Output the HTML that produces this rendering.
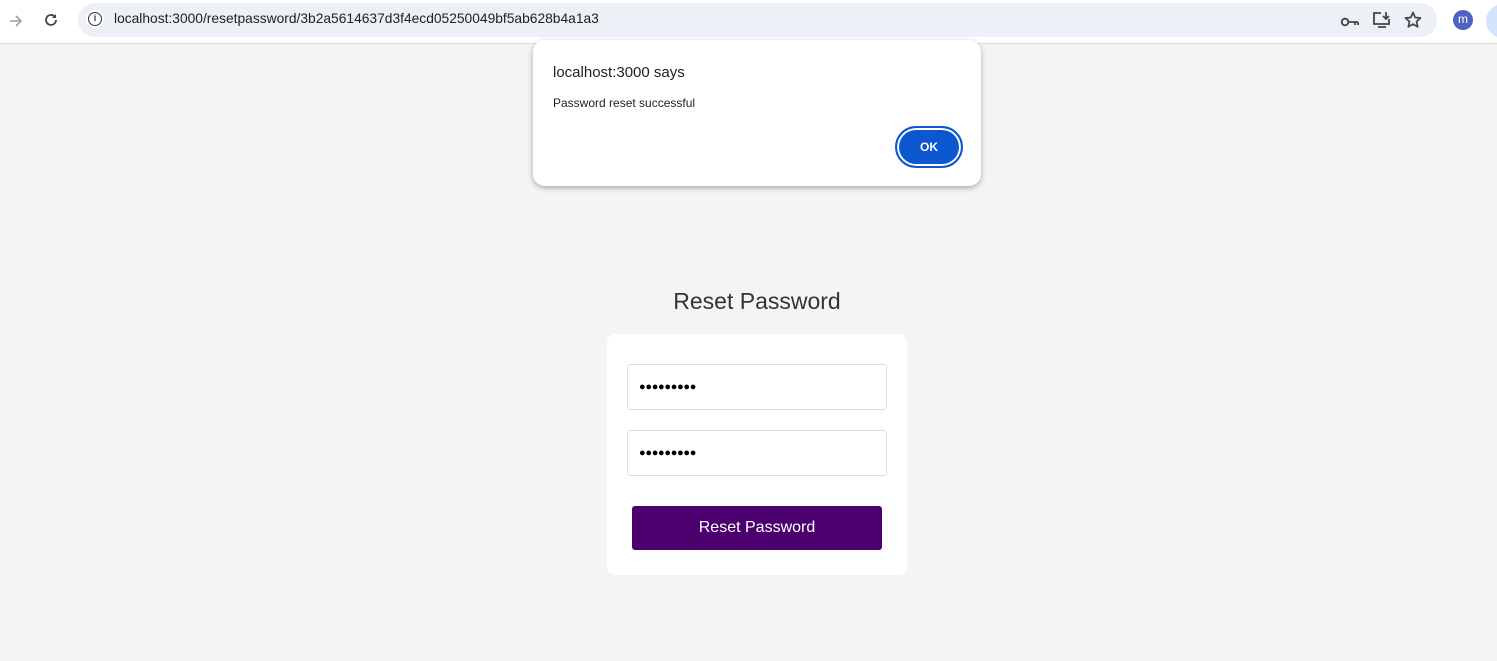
<!DOCTYPE html>
<html><head><style>
*{margin:0;padding:0;box-sizing:border-box}
body{width:1497px;height:661px;background:#f4f4f4;font-family:"Liberation Sans",sans-serif;position:relative;overflow:hidden}
.bar{position:absolute;left:0;top:0;width:1497px;height:44px;background:#fff;border-bottom:1px solid #dadce0}
.omni{position:absolute;left:78px;top:3px;width:1359px;height:34px;background:#edf0f7;border-radius:17px}
.url{position:absolute;left:114px;top:11px;font-size:13.8px;color:#1f1f1f}
.abs{position:absolute}
.dlg{position:absolute;left:533px;top:40px;width:448px;height:146px;background:#fff;border-radius:12px;box-shadow:0 2px 6px rgba(0,0,0,.3)}
.ok{position:absolute;left:362px;top:86px;width:68px;height:42px;border-radius:21px;background:#0b57d0;border:2px solid #0b57d0;box-shadow:inset 0 0 0 2px #fff;color:#fff;font-weight:bold;font-size:12px;text-align:center;line-height:38px}
.card{position:absolute;left:607px;top:334px;width:300px;height:241px;background:#fff;border-radius:8px}
.inp{position:absolute;left:20px;width:260px;height:46px;border:1px solid #ddd;border-radius:3px;font-size:11px;letter-spacing:-0.3px;padding:16px 0 0 11px;color:#000}
.btn{position:absolute;left:25px;top:172px;width:250px;height:44px;background:#4b006e;border-radius:3px;color:#fff;font-size:16px;text-align:center;line-height:44px}
</style></head><body>
<div class="bar">
<svg class="abs" style="left:7px;top:12px" width="18" height="18" viewBox="0 0 18 18"><path d="M3 9h11M9 4l5 5-5 5" stroke="#9aa0a6" stroke-width="1.6" fill="none"/></svg>
<svg class="abs" style="left:42px;top:11px" width="18" height="18" viewBox="0 0 18 18"><path d="M14 9a5 5 0 1 1-1.5-3.6" stroke="#444" stroke-width="1.8" fill="none"/><path d="M14 3v4h-4z" fill="#444"/></svg>
<div class="omni"></div>
<div class="abs" style="left:86px;top:10px;width:18px;height:18px;border-radius:50%;background:#fff"></div>
<div class="abs" style="left:88px;top:12px;width:14px;height:14px;border:1.6px solid #333;border-radius:50%;font-size:9px;font-weight:bold;text-align:center;line-height:11px;color:#333">i</div>
<div class="url">localhost:3000/resetpassword/3b2a5614637d3f4ecd05250049bf5ab628b4a1a3</div>
<svg class="abs" style="left:1340px;top:12px" width="20" height="20" viewBox="0 0 20 20"><circle cx="5" cy="10" r="3.3" stroke="#444" stroke-width="1.8" fill="none"/><path d="M8 10h10M15 10v3M18 10v3" stroke="#444" stroke-width="1.8"/></svg>
<svg class="abs" style="left:1372px;top:10px" width="20" height="20" viewBox="0 0 20 20"><path d="M9 3H2v11h15V9" stroke="#444" stroke-width="1.8" fill="none"/><path d="M6 17h8M14 2v7M11 6l3 3 3-3" stroke="#444" stroke-width="1.8" fill="none"/></svg>
<svg class="abs" style="left:1403px;top:10px" width="20" height="20" viewBox="0 0 20 20"><path d="M10 2.5l2.2 5 5.3.5-4 3.6 1.2 5.2L10 14.1l-4.7 2.7 1.2-5.2-4-3.6 5.3-.5z" stroke="#444" stroke-width="1.7" fill="none" stroke-linejoin="round"/></svg>
<div class="abs" style="left:1453px;top:10px;width:20px;height:20px;border-radius:50%;background:#5062c0;color:#fff;font-size:12px;text-align:center;line-height:19px">m</div>
<div class="abs" style="left:1486px;top:4px;width:34px;height:34px;border-radius:50%;background:#d3e3fd"></div>
</div>
<div class="dlg">
<div class="abs" style="left:20px;top:24px;font-size:15px;color:#1f1f1f">localhost:3000 says</div>
<div class="abs" style="left:20px;top:56px;font-size:12px;color:#1f1f1f">Password reset successful</div>
<div class="ok">OK</div>
</div>
<div class="abs" style="left:0;width:1514px;top:288px;text-align:center;font-size:23px;color:#333">Reset Password</div>
<div class="card">
<div class="inp" style="top:30px">●●●●●●●●●</div>
<div class="inp" style="top:96px">●●●●●●●●●</div>
<div class="btn">Reset Password</div>
</div>
</body></html>
